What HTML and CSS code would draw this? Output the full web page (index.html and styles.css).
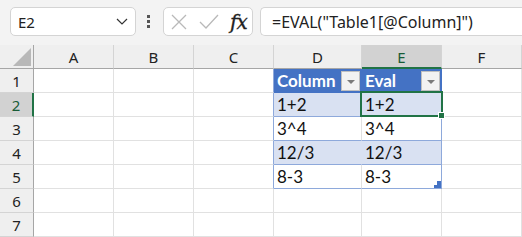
FILE: index.html
```html
<!DOCTYPE html>
<html lang="en">
<head>
  <meta charset="UTF-8">
  <title>EVAL</title>
  <link rel="stylesheet" href="styles.css">
</head>
<body>
  <div class="topbar">
    <div class="namebox">
      <span>E2</span>
      <svg class="chev" width="12" height="7" viewBox="0 0 12 7"><path d="M1 1 L6 6 L11 1" fill="none" stroke="#333" stroke-width="1.2"/></svg>
    </div>
    <div class="dots"><i></i><i></i><i></i></div>
    <div class="fxbox">
      <svg width="16" height="16" viewBox="0 0 16 16"><path d="M1 1 L15 15 M15 1 L1 15" stroke="#b9b9b9" stroke-width="1.3"/></svg>
      <svg width="20" height="15" viewBox="0 0 20 15"><path d="M1 8 L7 14 L19 1" fill="none" stroke="#b9b9b9" stroke-width="1.3"/></svg>
      <span class="fx">fx</span>
    </div>
    <div class="formula">=EVAL("Table1[@Column]")</div>
  </div>

  <div class="sheet">
    <div class="hd corner"><svg width="18" height="18" viewBox="0 0 18 18"><path d="M0 18 L18 18 L18 0 Z" fill="#b8b8b8"/></svg></div>
    <div class="hd">A</div>
    <div class="hd">B</div>
    <div class="hd">C</div>
    <div class="hd">D</div>
    <div class="hd active-col">E</div>
    <div class="hd">F</div>

    <div class="rh">1</div>
    <div class="c"></div><div class="c"></div><div class="c edge"></div>
    <div class="c th th-d">Column<span class="filter"></span></div>
    <div class="c th th-e">Eval<span class="filter"></span></div>
    <div class="c"></div>

    <div class="rh active-row">2</div>
    <div class="c"></div><div class="c"></div><div class="c edge"></div>
    <div class="c band band-d">1+2</div>
    <div class="c band band-e">1+2</div>
    <div class="c"></div>

    <div class="rh">3</div>
    <div class="c"></div><div class="c"></div><div class="c edge"></div>
    <div class="c plain">3^4</div>
    <div class="c plain plain-e">3^4</div>
    <div class="c"></div>

    <div class="rh">4</div>
    <div class="c"></div><div class="c"></div><div class="c edge"></div>
    <div class="c band band-d">12/3</div>
    <div class="c band band-e">12/3</div>
    <div class="c"></div>

    <div class="rh">5</div>
    <div class="c"></div><div class="c"></div><div class="c edge"></div>
    <div class="c plain">8-3</div>
    <div class="c plain plain-e">8-3<svg class="resize" width="7" height="7" viewBox="0 0 7 7"><path d="M7 0 L7 7 L0 7 L0 4 L3 4 L3 0 Z" fill="#4472c4"/></svg></div>
    <div class="c"></div>

    <div class="rh">6</div>
    <div class="c"></div><div class="c"></div><div class="c"></div><div class="c"></div><div class="c"></div><div class="c"></div>

    <div class="rh">7</div>
    <div class="c"></div><div class="c"></div><div class="c"></div><div class="c"></div><div class="c"></div><div class="c"></div>

    <div class="selection"><span class="handle"></span></div>
  </div>
</body>
</html>
```

FILE: styles.css
```css
html {
  background-color: #ffffff;
}

body {
  margin: 0;
  font-family: 'Noto Sans', 'Open Sans', sans-serif;
  color: #222;
  overflow: hidden;
}

/* formula bar */
.topbar {
  height: 45px;
  background: #f3f3f3;
  display: flex;
  align-items: flex-start;
  padding: 7px 0 0 10px;
  box-sizing: border-box;
  white-space: nowrap;
}

.namebox,
.fxbox,
.formula {
  height: 29px;
  background: #fff;
  border: 1px solid #d4d4d4;
  border-radius: 5px;
  box-sizing: border-box;
  display: flex;
  align-items: center;
}

.namebox {
  width: 126px;
  padding: 0 7px 0 7px;
  justify-content: space-between;
  font-size: 15px;
}

.dots {
  width: 3px;
  margin: 8px 13px 0 11px;
  display: flex;
  flex-direction: column;
  gap: 2px;
}

.dots i {
  display: block;
  width: 3px;
  height: 3px;
  background: #555;
}

.fxbox {
  width: 90px;
  padding: 0 0 0 7px;
  gap: 12px;
}

.fx {
  font-family: 'DejaVu Serif', 'Liberation Serif', serif;
  font-style: italic;
  font-size: 20px;
  color: #222;
  letter-spacing: -1px;
  margin-left: -1px;
  -webkit-text-stroke: 0.3px #222;
}

.formula {
  flex: 1;
  margin-left: 7px;
  border-right: none;
  border-radius: 5px 0 0 5px;
  padding-left: 11px;
  font-size: 16px;
}

/* grid */
.sheet {
  position: relative;
  display: grid;
  grid-template-columns: 34px 80px 80px 80px 88px 80px 80px;
  grid-auto-rows: 24px;
}

.sheet > div {
  box-sizing: border-box;
  border-right: 1px solid #e1e1e1;
  border-bottom: 1px solid #e1e1e1;
}

.hd {
  background: #efefef;
  border-bottom-color: #a6a6a6 !important;
  border-right-color: #d4d4d4 !important;
  text-align: center;
  line-height: 24px;
  font-size: 15px;
}

.corner {
  border-right-color: #a6a6a6 !important;
  display: flex;
  align-items: flex-end;
  justify-content: flex-end;
  padding: 0 2px 2px 0;
}

.corner svg {
  display: block;
}

.active-col {
  background: #d2d2d2;
  color: #185c37;
  border-bottom: 2px solid #217346 !important;
}

.rh {
  background: #efefef;
  border-right-color: #a6a6a6 !important;
  border-bottom-color: #d4d4d4 !important;
  text-align: center;
  line-height: 24px;
  font-size: 15px;
}

.active-row {
  background: #d2d2d2;
  color: #185c37;
  border-right: 2px solid #217346 !important;
}

.c {
  font-family: 'Lato', 'Liberation Sans', sans-serif;
  font-size: 17px;
  line-height: 24px;
  padding-left: 3px;
  color: #111;
  position: relative;
}

.edge {
  border-right-color: #8ea9db !important;
}

.th {
  background: #4472c4;
  color: #fff;
  font-weight: bold;
  border-bottom-color: #4472c4 !important;
  display: flex;
  align-items: center;
  justify-content: space-between;
  padding-right: 1px;
}

.th-d {
  border-right-color: #4472c4 !important;
}

.th-e {
  border-right-color: #4472c4 !important;
}

.filter {
  width: 19px;
  height: 20px;
  background: #f2f2f2;
  border: 1px solid #bfbfbf;
  box-sizing: border-box;
  position: relative;
}

.filter::after {
  content: "";
  position: absolute;
  left: 5px;
  top: 8px;
  border-left: 4px solid transparent;
  border-right: 4px solid transparent;
  border-top: 4px solid #7a7a7a;
}

.band {
  background: #d9e1f2;
  border-bottom-color: #8ea9db !important;
}

.band-d {
  border-right-color: #d9e1f2 !important;
}

.band-e,
.plain-e {
  border-right-color: #8ea9db !important;
}

.plain {
  border-bottom-color: #8ea9db !important;
}

.resize {
  position: absolute;
  right: 0;
  bottom: 0;
}

.selection {
  position: absolute;
  left: 360px;
  top: 46px;
  width: 83px;
  height: 26px;
  border: 2px solid #217346 !important;
  box-sizing: border-box;
  pointer-events: none;
}

.handle {
  position: absolute;
  right: -4px;
  bottom: -4px;
  width: 5px;
  height: 5px;
  background: #217346;
  border: 1px solid #fff;
}
```
